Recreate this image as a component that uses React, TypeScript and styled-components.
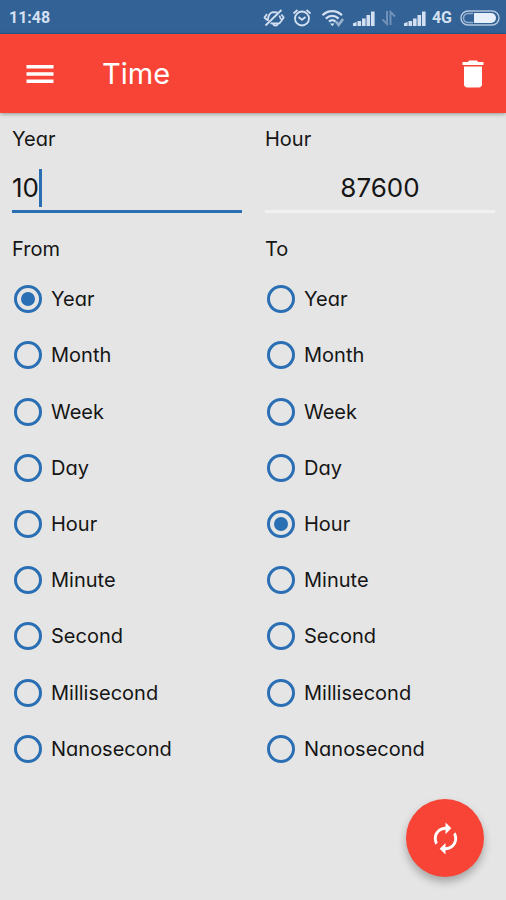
import React, { useState } from "react";
import styled, { createGlobalStyle } from "styled-components";

const color = {
  status: "#336296",
  statusEdge: "#255f92",
  red: "#f74436",
  blue: "#2a6fb3",
  page: "#e5e5e5",
  text: "#151515",
  pale: "#d3e0f1",
};

const GlobalStyle = createGlobalStyle`
  *, *::before, *::after { box-sizing: border-box; }
  body {
    margin: 0;
    background: ${color.page};
    color: ${color.text};
    font-family: Inter, "Open Sans", sans-serif;
    font-feature-settings: "cv11";
  }
`;

const Screen = styled.div`
  min-height: 100vh;
  display: flex;
  flex-direction: column;
`;

const StatusBar = styled.div`
  display: flex;
  align-items: center;
  justify-content: space-between;
  height: 34px;
  padding: 2px 6px 0 9px;
  background: ${color.status};
  border-bottom: 1px solid ${color.statusEdge};
  color: ${color.pale};
  font: 700 16px/20px Roboto, sans-serif;
`;

const StatusIcons = styled.div`
  display: flex;
  align-items: center;
  svg { display: block; }
`;

const Network = styled.span`
  margin: 0 8px 0 6px;
`;

const Spaced = styled.span<{ $gap: number }>`
  margin-left: ${(p) => p.$gap}px;
`;

const AppBar = styled.header`
  display: flex;
  align-items: center;
  height: 79px;
  padding: 0 15px 0 22px;
  background: ${color.red};
  color: #fff;
  box-shadow: 0 1px 4px rgba(0, 0, 0, 0.35);
`;

const IconButton = styled.button`
  display: flex;
  padding: 0;
  border: 0;
  background: none;
  color: inherit;
  cursor: pointer;
`;

const Title = styled.h1`
  flex: 1;
  margin: 0 0 0 44px;
  font-size: 29px;
  line-height: 36px;
  font-weight: 400;
`;

const Columns = styled.main`
  display: grid;
  grid-template-columns: 1fr 1fr;
`;

const Column = styled.section`
  padding: 14px 11px 0 12px;
`;

const FieldLabel = styled.label`
  display: block;
  font-size: 20px;
  line-height: 24px;
`;

const Field = styled.div`
  position: relative;
  margin-top: 16px;
  font-size: 26px;
  line-height: 40px;
`;

const ValueInput = styled.input<{ $result?: boolean }>`
  display: block;
  width: 100%;
  height: 46px;
  padding: 0 0 3px;
  border: 0;
  border-bottom: 3px solid ${(p) => (p.$result ? "#f1f1f1" : color.blue)};
  border-radius: 0;
  outline: 0;
  background: none;
  color: inherit;
  caret-color: transparent;
  font: inherit;
  font-feature-settings: inherit;
  text-align: ${(p) => (p.$result ? "center" : "left")};
`;

const CaretLine = styled.div`
  position: absolute;
  top: 2px;
  left: 0;
  display: flex;
  height: 38px;
  pointer-events: none;
`;

const CaretSpacer = styled.span`
  visibility: hidden;
`;

const Caret = styled.span`
  width: 3px;
  background: ${color.blue};
`;

const UnitGroup = styled.fieldset`
  min-width: 0;
  margin: 24px 0 0;
  padding: 0;
  border: 0;
`;

const GroupName = styled.legend`
  padding: 0;
  font-size: 20px;
  line-height: 24px;
`;

const UnitList = styled.div`
  display: grid;
  grid-auto-rows: 1fr;
  min-height: 506px;
  margin-top: 10px;
`;

const UnitRow = styled.label`
  display: flex;
  align-items: center;
  gap: 9px;
  padding-left: 2px;
  font-size: 20px;
  line-height: 24px;
  cursor: pointer;
`;

const Radio = styled.input`
  appearance: none;
  display: grid;
  place-items: center;
  flex: none;
  width: 28px;
  height: 28px;
  margin: 0;
  border: 3px solid ${color.blue};
  border-radius: 50%;
  &:checked::before {
    content: "";
    width: 14px;
    height: 14px;
    border-radius: 50%;
    background: ${color.blue};
  }
`;

const SwapButton = styled.button`
  position: fixed;
  right: 22px;
  bottom: 23px;
  display: grid;
  place-items: center;
  width: 78px;
  height: 78px;
  padding: 0;
  border: 0;
  border-radius: 50%;
  background: ${color.red};
  color: #fff;
  box-shadow: 0 5px 9px rgba(0, 0, 0, 0.28);
  cursor: pointer;
`;

const Glyph = ({ d, size }: { d: string; size: number }) => (
  <svg width={size} height={size} viewBox="0 0 24 24" fill="currentColor" aria-hidden="true">
    <path d={d} />
  </svg>
);

const MENU = "M3 18h18v-2.4H3V18zm0-4.8h18v-2.4H3v2.4zM3 6v2.4h18V6H3z";
const TRASH =
  "M6 19c0 1.1.9 2 2 2h8c1.1 0 2-.9 2-2V7H6v12zM19 4h-3.5l-1-1h-5l-1 1H5v2h14V4z";
const RENEW =
  "M12 6v3l4-4-4-4v3c-4.42 0-8 3.58-8 8 0 1.57.46 3.03 1.24 4.26L6.7 14.8c-.45-.83-.7-1.79-.7-2.8 0-3.31 2.69-6 6-6zm6.76 1.74L17.3 9.2c.44.84.7 1.79.7 2.8 0 3.31-2.69 6-6 6v-3l-4 4 4 4v-3c4.42 0 8-3.58 8-8 0-1.57-.46-3.03-1.24-4.26z";

const MutedBell = () => (
  <svg width="22" height="18" viewBox="0 0 22 18" fill="none" stroke="currentColor" strokeWidth="1.8" strokeLinejoin="round">
    <path d="M4.500 12C5.500 10 4.500 4 10 3.200l4.500.3M16.500 6.500c.2 2 .5 3 2.500 4.500l-2.500 3.300H7.500" />
    <path d="M10 15c1 2 4 2 5 0M4 5 1.500 8.500 4 11M18.500 5.500l2.200 3-1.700 2.500" />
    <path d="M2.500 16.500 18.500 1" />
  </svg>
);

const Alarm = () => (
  <svg width="20" height="18" viewBox="0 0 20 18" fill="none" stroke="currentColor" strokeWidth="1.800">
    <circle cx="10" cy="9.500" r="7" />
    <path d="M1.500 4.500 5.500 1M18.500 4.500 14.500 1M6.500 8l3.500 2.800L13.500 8" />
  </svg>
);

const Wifi = () => (
  <svg width="24" height="18" viewBox="0 0 24 18" fill="none" stroke="currentColor" strokeWidth="2.300">
    <path d="M1.500 6.200c5.500-5.500 14-5.500 19.500 0M4.800 9.600c3.800-3.600 9-3.600 12.800 0M8 12.700c2-1.900 4.500-1.900 6.500 0" />
    <path d="M9 14.500h4.500l-2.200 2.700z" fill="currentColor" stroke="none" />
    <path d="m15 12.500 2.600 3.500L22 10" strokeWidth="2.500" opacity=".65" />
  </svg>
);

const Signal = () => (
  <svg width="22" height="16" viewBox="0 0 22 16" fill="currentColor">
    <path d="M0 13.200 3.600 12v4H0zM4.500 11h3.600v5H4.500zM9 8.500h3.600V16H9zM13.500 5h3.600v11h-3.600zM18 1.500h3.600V16H18z" />
  </svg>
);

const DataArrows = () => (
  <svg width="16" height="16" viewBox="0 0 16 16" fill="none" stroke="currentColor" strokeWidth="2" opacity=".38">
    <path d="M6 1v13L1.500 9.500M9.500 15V2L14 6.500" />
  </svg>
);

const Battery = () => (
  <svg width="40" height="16" viewBox="0 0 40 16">
    <rect x="1" y="1" width="38" height="14" rx="7" fill="none" stroke="currentColor" strokeWidth="1.500" opacity=".8" />
    <path d="M14 3h17a5 5 0 0 1 0 10H14z" fill="#e7effb" />
    <path d="M13 3.500H8a4.500 4.500 0 0 0 0 9h5" fill="none" stroke="currentColor" strokeWidth="1.500" opacity=".6" />
  </svg>
);

const HOURS: Record<string, number> = {
  Year: 8760,
  Month: 730,
  Week: 168,
  Day: 24,
  Hour: 1,
  Minute: 1 / 60,
  Second: 1 / 3600,
  Millisecond: 1 / 3.6e6,
  Nanosecond: 1 / 3.6e12,
};

type UnitsProps = { legend: string; name: string; value: string; onPick: (unit: string) => void };

const Units = ({ legend, name, value, onPick }: UnitsProps) => (
  <UnitGroup>
    <GroupName>{legend}</GroupName>
    <UnitList>
      {Object.keys(HOURS).map((unit) => (
        <UnitRow key={unit}>
          <Radio type="radio" name={name} checked={unit === value} onChange={() => onPick(unit)} />
          {unit}
        </UnitRow>
      ))}
    </UnitList>
  </UnitGroup>
);

export default function App() {
  const [amount, setAmount] = useState("10");
  const [from, setFrom] = useState("Year");
  const [to, setTo] = useState("Hour");
  const result = amount === "" ? "" : String((Number(amount) * HOURS[from]) / HOURS[to]);

  const swap = () => {
    setFrom(to);
    setTo(from);
  };

  return (
    <Screen>
      <GlobalStyle />
      <StatusBar>
        <span>11:48</span>
        <StatusIcons>
          <MutedBell />
          <Spaced $gap={7}><Alarm /></Spaced>
          <Spaced $gap={9}><Wifi /></Spaced>
          <Spaced $gap={8}><Signal /></Spaced>
          <Spaced $gap={6}><DataArrows /></Spaced>
          <Spaced $gap={7}><Signal /></Spaced>
          <Network>4G</Network>
          <Battery />
        </StatusIcons>
      </StatusBar>
      <AppBar>
        <IconButton type="button" aria-label="Menu"><Glyph d={MENU} size={36} /></IconButton>
        <Title>Time</Title>
        <IconButton type="button" aria-label="Clear" onClick={() => setAmount("")}>
          <Glyph d={TRASH} size={36} />
        </IconButton>
      </AppBar>
      <Columns>
        <Column>
          <FieldLabel htmlFor="amount">{from}</FieldLabel>
          <Field>
            <ValueInput
              id="amount"
              inputMode="decimal"
              value={amount}
              onChange={(e) => setAmount(e.target.value.replace(/[^\d.]/g, ""))}
            />
            <CaretLine aria-hidden="true">
              <CaretSpacer>{amount}</CaretSpacer>
              <Caret />
            </CaretLine>
          </Field>
          <Units legend="From" name="from" value={from} onPick={setFrom} />
        </Column>
        <Column>
          <FieldLabel htmlFor="result">{to}</FieldLabel>
          <Field>
            <ValueInput id="result" $result readOnly value={result} />
          </Field>
          <Units legend="To" name="to" value={to} onPick={setTo} />
        </Column>
      </Columns>
      <SwapButton type="button" aria-label="Swap units" onClick={swap}>
        <Glyph d={RENEW} size={35} />
      </SwapButton>
    </Screen>
  );
}
